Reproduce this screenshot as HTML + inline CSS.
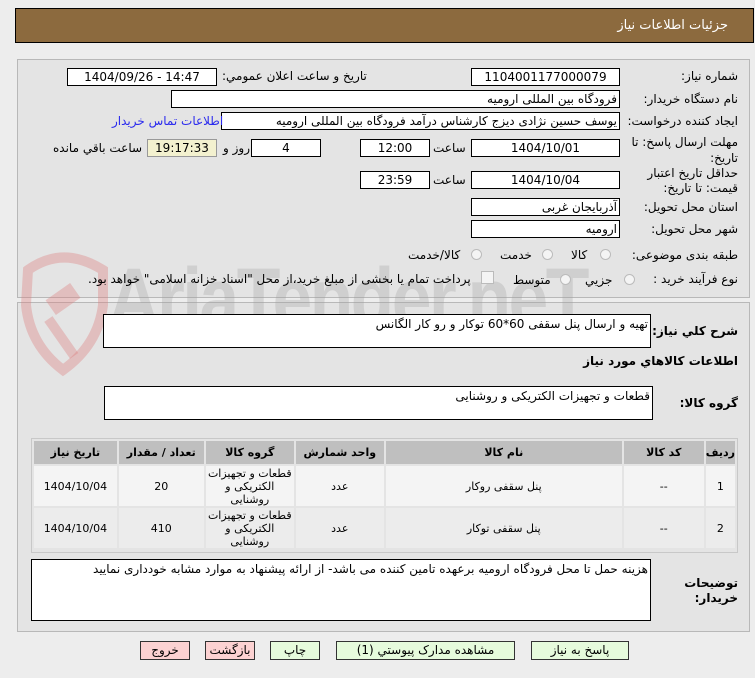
<!DOCTYPE html>
<html><head><meta charset="utf-8"><style>
body{margin:0;width:755px;height:678px;background:#ededed;font-family:"DejaVu Sans","Liberation Sans",sans-serif;font-size:12px;color:#000;position:relative;overflow:hidden}
.a{position:absolute;white-space:nowrap}
.r{direction:rtl;text-align:right}
.box{position:absolute;background:#fff;border:1px solid #000;box-sizing:border-box;height:18px;line-height:16px;font-size:12px;direction:rtl;padding:0 2px;white-space:nowrap;overflow:hidden}
.c{text-align:center}
.lbl{position:absolute;direction:rtl;text-align:right;right:17px;font-size:12px}
.rad{position:absolute;width:11px;height:11px;border-radius:50%;border:1px solid #bbb;background:#f4f4f4;box-sizing:border-box}
.btn{position:absolute;top:641px;height:19px;border:1px solid #333;box-sizing:border-box;text-align:center;line-height:17px;font-size:12px;background:#e6fbdc}
.btn.red{background:#fcd2d2}
table{border-collapse:separate;border-spacing:2px}
td,th{font-size:11px;text-align:center;direction:rtl;padding:0}
th{background:#bfbfbf;height:23px;font-weight:bold}
td{height:40px;line-height:13px}
</style></head><body>
<div class="a" style="left:15px;top:8px;width:739px;height:35px;background:#8c6a3e;border:1px solid #000;box-sizing:border-box"></div>
<div class="a r" style="right:27px;top:18px;color:#fff;font-size:13px">جزئيات اطلاعات نياز</div>

<div class="a" style="left:17px;top:59px;width:733px;height:239px;background:#e4e4e4;border:1px solid #b8b8b8;box-sizing:border-box"></div>
<div class="a" style="left:17px;top:302px;width:733px;height:330px;background:#e4e4e4;border:1px solid #b8b8b8;box-sizing:border-box"></div>

<svg class="a" style="left:18px;top:245px" width="90" height="140" viewBox="0 0 90 140">
<path d="M10 25 Q45 0 85 25 L85 60 Q80 100 45 125 Q12 100 8 60 Z" fill="none" stroke="rgba(220,120,120,0.35)" stroke-width="10"/>
<rect x="30" y="45" width="30" height="18" transform="rotate(-35 45 54)" fill="rgba(220,120,120,0.35)"/>
<rect x="38" y="70" width="10" height="45" transform="rotate(-35 43 92)" fill="rgba(220,120,120,0.35)"/>
</svg>
<div class="a" style="left:108px;top:250px;font-size:84px;font-weight:bold;color:rgba(160,160,160,0.3);font-family:'Liberation Sans',sans-serif;letter-spacing:-3px;transform:scaleX(0.85);transform-origin:left">AriaTender.neT</div>

<div class="lbl" style="top:69px">شماره نياز:</div>
<div class="box c" style="left:471px;top:68px;width:149px;direction:ltr">1104001177000079</div>
<div class="a r" style="left:222px;top:69px">تاريخ و ساعت اعلان عمومي:</div>
<div class="box c" style="left:67px;top:68px;width:150px;direction:ltr">1404/09/26 - 14:47</div>

<div class="lbl" style="top:92px">نام دستگاه خريدار:</div>
<div class="box" style="left:171px;top:90px;width:449px">فرودگاه بین المللی ارومیه</div>

<div class="lbl" style="top:114px">ايجاد کننده درخواست:</div>
<div class="box" style="left:221px;top:112px;width:399px">یوسف حسین نژادی دیزج کارشناس درآمد فرودگاه بین المللی ارومیه</div>
<div class="a r" style="left:112px;top:114px;color:#2a2aee">اطلاعات تماس خريدار</div>

<div class="lbl" style="top:134px;line-height:16px">مهلت ارسال پاسخ: تا<br>تاريخ:</div>
<div class="box c" style="left:471px;top:139px;width:149px">1404/10/01</div>
<div class="a" style="left:433px;top:141px">ساعت</div>
<div class="box c" style="left:360px;top:139px;width:70px">12:00</div>
<div class="box c" style="left:251px;top:139px;width:70px">4</div>
<div class="a" style="left:223px;top:141px">روز و</div>
<div class="box c" style="left:147px;top:139px;width:70px;background:#f3f1cf;border-color:#999">19:17:33</div>
<div class="a r" style="left:53px;top:141px">ساعت باقي مانده</div>

<div class="lbl" style="top:166px;line-height:15px">حداقل تاريخ اعتبار<br>قيمت: تا تاريخ:</div>
<div class="box c" style="left:471px;top:171px;width:149px">1404/10/04</div>
<div class="a" style="left:433px;top:173px">ساعت</div>
<div class="box c" style="left:360px;top:171px;width:70px">23:59</div>

<div class="lbl" style="top:200px">استان محل تحويل:</div>
<div class="box" style="left:471px;top:198px;width:149px">آذربایجان غربی</div>
<div class="lbl" style="top:222px">شهر محل تحويل:</div>
<div class="box" style="left:471px;top:220px;width:149px">ارومیه</div>

<div class="lbl" style="top:248px">طبقه بندی موضوعی:</div>
<div class="rad" style="left:600px;top:249px"></div><div class="a" style="left:571px;top:248px">کالا</div>
<div class="rad" style="left:542px;top:249px"></div><div class="a" style="left:500px;top:248px">خدمت</div>
<div class="rad" style="left:471px;top:249px"></div><div class="a" style="left:408px;top:248px">کالا/خدمت</div>

<div class="lbl" style="top:272px">نوع فرآيند خريد :</div>
<div class="rad" style="left:624px;top:274px"></div><div class="a" style="left:585px;top:273px">جزيي</div>
<div class="rad" style="left:560px;top:274px"></div><div class="a" style="left:513px;top:273px">متوسط</div>
<div class="a" style="left:481px;top:271px;width:11px;height:11px;border:1px solid #bbb;background:#f4f4f4"></div>
<div class="a r" style="left:88px;top:272px">پرداخت تمام يا بخشی از مبلغ خريد،از محل "اسناد خزانه اسلامی" خواهد بود.</div>

<div class="lbl" style="top:324px;font-weight:bold">شرح کلي نياز:</div>
<div class="box" style="left:103px;top:314px;width:548px;height:34px;line-height:18px">تهیه و ارسال پنل سقفی 60*60 توکار و رو کار الگانس</div>
<div class="lbl" style="top:354px;font-weight:bold">اطلاعات کالاهاي مورد نياز</div>
<div class="lbl" style="top:396px;font-weight:bold">گروه کالا:</div>
<div class="box" style="left:104px;top:386px;width:549px;height:34px;line-height:18px">قطعات و تجهیزات الکتریکی و روشنایی</div>

<div class="a" style="left:31px;top:438px;width:707px;height:115px;border:1px solid #c8c8c8;box-sizing:border-box;background:#e4e4e4">
<table style="width:705px;direction:rtl">
<tr><th style="width:28px">رديف</th><th style="width:80px">کد کالا</th><th style="width:236px">نام کالا</th><th style="width:88px">واحد شمارش</th><th style="width:88px">گروه کالا</th><th style="width:85px">تعداد / مقدار</th><th>تاريخ نياز</th></tr>
<tr><td style="background:#f4f4f4">1</td><td style="background:#f4f4f4">--</td><td style="background:#f4f4f4">پنل سقفی روکار</td><td style="background:#f4f4f4">عدد</td><td style="background:#f4f4f4">قطعات و تجهیزات<br>الکتریکی و<br>روشنایی</td><td style="background:#f4f4f4">20</td><td style="background:#f4f4f4">1404/10/04</td></tr>
<tr><td style="background:#ececec">2</td><td style="background:#ececec">--</td><td style="background:#ececec">پنل سقفی توکار</td><td style="background:#ececec">عدد</td><td style="background:#ececec">قطعات و تجهیزات<br>الکتریکی و<br>روشنایی</td><td style="background:#ececec">410</td><td style="background:#ececec">1404/10/04</td></tr>
</table></div>

<div class="lbl" style="top:576px;font-weight:bold;line-height:15px">توضيحات<br>خريدار:</div>
<div class="box" style="left:31px;top:559px;width:620px;height:62px;line-height:18px">هزینه حمل تا محل فرودگاه ارومیه برعهده تامین کننده می باشد- از ارائه پیشنهاد به موارد مشابه خودداری نمایید</div>

<div class="btn" style="left:531px;width:98px">پاسخ به نياز</div>
<div class="btn" style="left:336px;width:179px">مشاهده مدارک پيوستي (1)</div>
<div class="btn" style="left:270px;width:50px">چاپ</div>
<div class="btn red" style="left:205px;width:50px">بازگشت</div>
<div class="btn red" style="left:140px;width:50px">خروج</div>
</body></html>
